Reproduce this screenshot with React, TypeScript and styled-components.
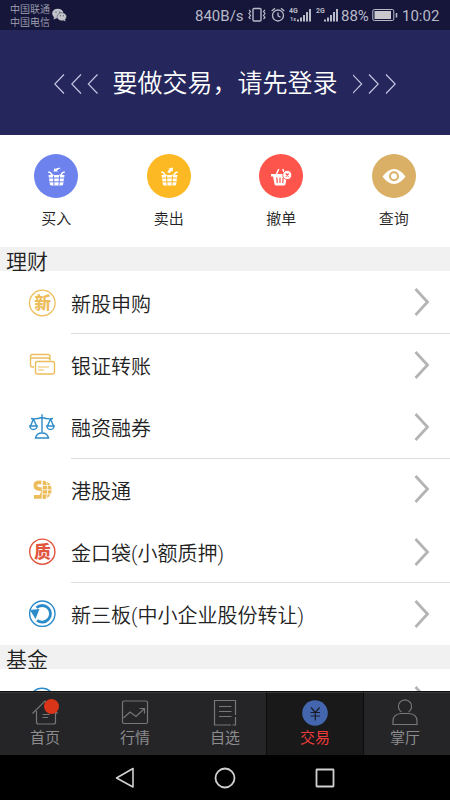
import React from 'react';
import styled, { createGlobalStyle } from 'styled-components';

const GlobalStyle = createGlobalStyle`
  * {
    box-sizing: border-box;
  }

  body {
    margin: 0;
    background: #fff;
    font-family: Roboto, 'Noto Sans CJK SC', sans-serif;
  }
`;

const Screen = styled.div`
  display: flex;
  flex-direction: column;
  width: 450px;
  height: 800px;
  overflow: hidden;
  background: #fff;
`;

const StatusBar = styled.header`
  display: flex;
  align-items: center;
  flex: 0 0 30px;
  padding: 0 10px;
  background: #15163a;
  color: #b9bac8;
  font-size: 15px;
  line-height: 28px;
`;

const Carriers = styled.div`
  width: 40px;
  padding-top: 1px;
  color: #a3a4b4;
  font-size: 10px;
  font-weight: 350;
  line-height: 13px;
  white-space: nowrap;
`;

const StatusIcon = styled.svg<{ $left?: number }>`
  flex: none;
  margin-left: ${(p) => p.$left || 0}px;
`;

const StatusText = styled.span<{ $left: number; $width: number }>`
  flex: none;
  width: ${(p) => p.$width}px;
  margin-left: ${(p) => p.$left}px;
  padding-top: 1px;
  white-space: nowrap;
`;

const Banner = styled.div`
  display: flex;
  align-items: center;
  justify-content: center;
  gap: 15px;
  flex: 0 0 105px;
  padding-top: 2px;
  background: #24265c;
  color: #fff;
  font-size: 25px;
  font-weight: 350;
  line-height: 36px;
`;

const BannerText = styled.span`
  width: 225px;
  padding-top: 1px;
  white-space: nowrap;
`;

const QuickActions = styled.div`
  display: flex;
  flex: 0 0 112px;
  padding-top: 19px;
`;

const QuickAction = styled.div`
  display: flex;
  flex: 1;
  flex-direction: column;
  align-items: center;
  color: #222;
  font-size: 15px;
  font-weight: 350;
  line-height: 22px;
`;

const QuickCircle = styled.div<{ $color: string }>`
  width: 44px;
  height: 44px;
  margin-bottom: 10px;
  border-radius: 50%;
  background: ${(p) => p.$color};
`;

const SectionTitle = styled.h2`
  flex: none;
  height: 24px;
  margin: 0;
  padding: 3px 0 0 6px;
  background: #f1f1f1;
  color: #222;
  font-size: 21px;
  font-weight: 350;
  line-height: 24px;
`;

const List = styled.div<{ $height: number }>`
  flex: none;
  height: ${(p) => p.$height}px;
  padding-top: 0.7px;
  overflow: hidden;
`;

const Row = styled.div`
  display: flex;
  align-items: stretch;
  height: 62.3px;
  padding-left: 27px;
`;

const RowIcon = styled.svg`
  flex: none;
  align-self: center;
  margin-right: 14px;
`;

const RowBody = styled.div<{ $divider?: boolean }>`
  display: flex;
  flex: 1;
  align-items: center;
  justify-content: space-between;
  padding: 0 20px 0 0;
  border-bottom: 1px solid ${(p) => (p.$divider ? '#dcdcdc' : 'transparent')};
  color: #222;
  font-size: 20px;
  font-weight: 350;
  white-space: nowrap;
`;

const RowLabel = styled.span`
  padding-top: 2px;
`;

const TabBar = styled.nav`
  display: flex;
  flex: 0 0 64px;
  border-top: 1px solid #0c0c0d;
  background: #252528;
`;

const Tab = styled.div<{ $active?: boolean }>`
  position: relative;
  display: flex;
  flex-direction: column;
  align-items: center;
  flex: 0 0 ${(p) => (p.$active ? 98 : 90)}px;
  margin: 0 ${(p) => (p.$active ? -4 : 0)}px;
  padding-top: 6px;
  border-top: 1px solid #38383b;
  border-left: ${(p) => (p.$active ? '1px solid #0b0b0b' : 'none')};
  border-right: ${(p) => (p.$active ? '1px solid #0b0b0b' : 'none')};
  background: ${(p) => (p.$active ? '#191919' : 'transparent')};
  z-index: ${(p) => (p.$active ? 1 : 0)};
  color: ${(p) => (p.$active ? '#ee3b3b' : '#8c8c8e')};
  font-size: 15px;
  line-height: 20px;
`;

const TabIcon = styled.svg`
  flex: none;
  margin-bottom: 1px;
`;

const Badge = styled.span`
  position: absolute;
  top: 6px;
  left: 44px;
  width: 15px;
  height: 15px;
  border-radius: 50%;
  background: #db3519;
`;

const SystemNav = styled.footer`
  display: flex;
  align-items: center;
  justify-content: center;
  gap: 76px;
  flex: 0 0 45px;
  background: #000;
`;

const Arrows: React.FC<{ flip?: boolean }> = ({ flip }) => (
  <svg width="44" height="22" viewBox="0 0 44 22" fill="none" stroke="#c9cae6" strokeWidth="1.1">
    <g transform={flip ? 'translate(43 0) scale(-1 1)' : undefined}>
      <path d="M10 1.500 0.800 11l9.200 9.500M27 1.500 17.800 11l9.200 9.500M43.500 1.500 34.300 11l9.200 9.500" />
    </g>
  </svg>
);

const Chevron = () => (
  <svg width="16" height="30" viewBox="0 0 16 30" fill="none" stroke="#b4b4b4" strokeWidth="2.800">
    <path d="M1.500 2 13.500 15 1.500 28" />
  </svg>
);

const Signal: React.FC<{ label: string; sub?: string }> = ({ label, sub }) => (
  <StatusIcon $left={4} width="23" height="18" viewBox="0 0 23 18" fill="#b9bac8">
    <text x="0" y="7" fontSize="7" fontWeight="700">{label}</text>
    {sub && <text x="1" y="15" fontSize="5.500" fontWeight="700">{sub}</text>}
    <path d="M8 13.500h2v2H8zM11 11.500h2v4h-2zM14 9h2v6.500h-2zM17 6h2v9.500h-2zM20 3h2v12.500h-2z" />
  </StatusIcon>
);

const Basket: React.FC<{ arrow: 'in' | 'out' }> = ({ arrow }) => (
  <svg width="44" height="44" viewBox="0 0 44 44" fill="#fff">
    <path d="M14.500 21h16l-1.400 9.300q-.2 1.200-1.400 1.200H17.300q-1.200 0-1.400-1.200z" />
    <path
      d="M14.200 18.300q2.300-.6 3 1.500t2.800 1.400M30.800 18.300q-2.300-.6-3 1.500t-2.800 1.400"
      fill="none"
      stroke="#fff"
      strokeWidth="1.500"
    />
    {arrow === 'in' ? (
      <path d="M19.500 17.500l1-3.500 1 .9q2.500-1.500 5.500-1-3 1-4.200 2.500l1.200 1.200z" />
    ) : (
      <path d="M20.500 18.500q-.3-2 2-3l-1-1 4.500-1-.3 4.200-1-.8q-1.500.6-1.500 2z" />
    )}
    <path
      d="M15 24h15M15.500 27.800h14M19.500 21.500l.5 10M25.500 21.500l-.5 10"
      fill="none"
      stroke={arrow === 'in' ? '#6d82ed' : '#fdb924'}
      strokeWidth="1"
    />
  </svg>
);

const CancelBasket = () => (
  <svg width="44" height="44" viewBox="0 0 44 44" fill="none" stroke="#fff">
    <path d="M17.500 20l2.300-5M26 20l-2.300-5" strokeWidth="1.500" />
    <path d="M12 20h17v2.500h-1.200L26.500 30q-.2 1.500-1.700 1.500h-7.600q-1.500 0-1.700-1.500l-1.500-7.500h-2z" fill="#fff" stroke="none" />
    <path d="M17.800 23.500l.5 5.500M21 23.500V29M24.200 23.500l-.5 5.500" stroke="#fd554b" strokeWidth="1.200" />
    <circle cx="28.200" cy="21" r="4.500" fill="#fff" stroke="#fd554b" strokeWidth=".8" />
    <path d="M26.700 19.500l3 3M29.700 19.500l-3 3" stroke="#fd554b" strokeWidth="1.300" />
  </svg>
);

const Eye = () => (
  <svg width="44" height="44" viewBox="0 0 44 44">
    <path d="M10.500 22.500Q16 15 22 15t11.500 7.500Q28 30 22 30t-11.500-7.500z" fill="#fff" />
    <circle cx="22" cy="22.300" r="4" fill="#fff" stroke="#dab066" strokeWidth="2" />
  </svg>
);

const quickActions = [
  { label: '买入', color: '#6d82ed', icon: <Basket arrow="in" /> },
  { label: '卖出', color: '#fdb924', icon: <Basket arrow="out" /> },
  { label: '撤单', color: '#fd554b', icon: <CancelBasket /> },
  { label: '查询', color: '#dab066', icon: <Eye /> },
];

const GOLD = '#edbd5c';
const BLUE = '#2c8bc9';
const RED = '#e2543c';

const services = [
  {
    label: '新股申购',
    icon: (
      <>
        <circle cx="15.300" cy="15" r="12.800" stroke={GOLD} strokeWidth="1.300" />
        <text x="15.800" y="21" fontSize="16.500" fontWeight="900" textAnchor="middle" fill={GOLD}>新</text>
      </>
    ),
  },
  {
    label: '银证转账',
    icon: (
      <g stroke={GOLD} strokeWidth="1.400">
        <path d="M7 17H5.500q-2 0-2-2V6.500q0-2 2-2h15.500q2 0 2 2v4M3.500 8H23" />
        <rect x="8.500" y="11.500" width="19" height="12.500" rx="2" />
        <path d="M11 17h11M11 20h6" strokeWidth="1.200" />
      </g>
    ),
  },
  {
    label: '融资融券',
    icon: (
      <g stroke={BLUE} strokeWidth="1.400">
        <path d="M15 2.300v18M4 6.500Q9 7.500 15 5.500q6 2 11 1M6.500 7 3.500 14M6.500 7l3 7M23.500 7l-3 7M23.500 7l3 7" />
        <path d="M2.800 14h7.400q-.5 3.500-3.700 3.500T2.800 14zM19.800 14h7.400q-.5 3.500-3.700 3.500T19.800 14zM8.500 26q1-5 6.500-5t6.500 5z" />
      </g>
    ),
  },
  {
    label: '港股通',
    icon: (
      <>
        <path d="M15.500 5.500a9.300 9.300 0 0 1 0 18.600z" fill={GOLD} />
        <path d="M14.500 7.600Q8.300 6.600 8.300 10.300t5 3.900.5 7.700H7" stroke={GOLD} strokeWidth="3.800" />
        <path d="M15.200 4.500v20M19 5.500q3.500 9.500 0 18.500M15 10.500h11M15 14.800h11M15 19h11" stroke="#fff" strokeWidth=".8" />
      </>
    ),
  },
  {
    label: '金口袋(小额质押)',
    icon: (
      <>
        <circle cx="15.300" cy="14.700" r="12.600" stroke={RED} strokeWidth="1.400" />
        <text x="15.500" y="20.700" fontSize="16.500" fontWeight="900" textAnchor="middle" fill={RED}>质</text>
      </>
    ),
  },
  {
    label: '新三板(中小企业股份转让)',
    icon: (
      <>
        <circle cx="15.300" cy="14.700" r="12.700" stroke={BLUE} strokeWidth="1.400" />
        <path d="M9.500 8.700a8.300 8.300 0 1 1 .5 12.600" stroke={BLUE} strokeWidth="2.800" />
        <path d="M3 11l9.500-1-4 10z" fill={BLUE} />
      </>
    ),
  },
];

const tabs = [
  {
    label: '首页',
    badge: true,
    icon: <path d="M1.500 14.500 14 2l12.500 12.500M5.500 12v11q0 2 2 2h15q2 0 2-2V12M11.500 15.500h7M11.500 18.500h5.500" />,
  },
  {
    label: '行情',
    icon: (
      <>
        <rect x="1.500" y="2" width="25" height="22.500" rx="1.500" />
        <path d="M2.500 19l6.500-6 6 4.500 8.500-8M18.500 9.500h5v5" />
      </>
    ),
  },
  {
    label: '自选',
    icon: <path d="M24.500 16V1.500h-21V26H20M24.500 18v8h-3M8 7.500h12.500M8 12.500h12.500M8 17.500h12.500" />,
  },
  {
    label: '交易',
    active: true,
    icon: (
      <>
        <circle cx="14" cy="14" r="12.800" fill="#4466ae" stroke="none" />
        <path d="M10 8.500l4.300 5 4.300-5M9.500 13.500h9.500M9.500 17h9.500M14.300 13.500V21.500" stroke="#191d29" />
      </>
    ),
  },
  {
    label: '掌厅',
    icon: (
      <>
        <path d="M10.500 13A6.600 6.600 0 1 1 17.500 13" />
        <path d="M2 25.500v-3.500q0-7 8.500-7.500h7q8.500.5 8.500 7.500v3.500z" />
      </>
    ),
  },
];

const App: React.FC = () => {
  return (
    <Screen lang="zh-CN">
      <GlobalStyle />

      <StatusBar>
        <Carriers>
          <div>中国联通</div>
          <div>中国电信</div>
        </Carriers>
        <StatusIcon $left={2} width="15" height="14" viewBox="0 0 15 14" fill="#c3c3cb">
          <ellipse cx="5.800" cy="5.500" rx="5.600" ry="4.800" />
          <path d="M2 9l-.5 2.500L5 10z" />
          <ellipse cx="9.800" cy="8.700" rx="4.700" ry="4" stroke="#15163a" strokeWidth=".4" />
          <path d="M11 12l2.500 1.500L13 11z" />
          <g fill="#15163a">
            <circle cx="4" cy="4" r=".6" />
            <circle cx="7.700" cy="4" r=".6" />
            <circle cx="8.300" cy="7.700" r=".5" />
            <circle cx="11.300" cy="7.700" r=".5" />
          </g>
        </StatusIcon>
        <StatusText $left={128} $width={49}>840B/s</StatusText>
        <StatusIcon $left={4} width="18" height="16" viewBox="0 0 18 16" fill="none" stroke="#b9bac8" strokeWidth="1.400">
          <rect x="5" y="1.500" width="8" height="12.500" rx="1" />
          <path d="M1 3l1.500 1.500L1 6.500l1.500 2L1 10.500 2.500 12M17 3l-1.500 1.500 1.500 2-1.500 2 1.500 2L15.500 12" strokeWidth="1.200" />
        </StatusIcon>
        <StatusIcon $left={5} width="14" height="16" viewBox="0 0 14 16" fill="none" stroke="#b9bac8" strokeWidth="1.300">
          <circle cx="7" cy="8.500" r="5.500" />
          <path d="M7 5.500v3.300l2.500 1.500M.7 4 4 1.200M10 1.200 13.300 4" />
        </StatusIcon>
        <Signal label="4G" sub="1x" />
        <Signal label="2G" />
        <StatusText $left={2} $width={29}>88%</StatusText>
        <StatusIcon $left={2} width="26" height="14" viewBox="0 0 26 14" fill="none" stroke="#b9bac8">
          <rect x=".8" y="1.500" width="21" height="11" rx="1.500" />
          <path d="M24.500 5v4.500" strokeWidth="1.600" />
          <rect x="2.500" y="3" width="16.500" height="8" fill="#c8c8cc" stroke="none" />
        </StatusIcon>
        <StatusText $left={4} $width={39}>10:02</StatusText>
      </StatusBar>

      <Banner>
        <Arrows />
        <BannerText>要做交易，请先登录</BannerText>
        <Arrows flip />
      </Banner>

      <QuickActions>
        {quickActions.map((action) => (
          <QuickAction key={action.label}>
            <QuickCircle $color={action.color}>{action.icon}</QuickCircle>
            {action.label}
          </QuickAction>
        ))}
      </QuickActions>

      <SectionTitle>理财</SectionTitle>
      <List $height={374}>
        {services.map((item, index) => (
          <Row key={item.label}>
            <RowIcon width="30" height="30" viewBox="0 0 30 30" fill="none">{item.icon}</RowIcon>
            <RowBody $divider={index % 2 === 0}>
              <RowLabel>{item.label}</RowLabel>
              <Chevron />
            </RowBody>
          </Row>
        ))}
      </List>

      <SectionTitle>基金</SectionTitle>
      <List $height={22}>
        <Row>
          <RowIcon width="30" height="30" viewBox="0 0 30 30" fill="none">
            <circle cx="15" cy="15" r="12.700" stroke={BLUE} strokeWidth="1.400" />
          </RowIcon>
          <RowBody>
            <span />
            <Chevron />
          </RowBody>
        </Row>
      </List>

      <TabBar>
        {tabs.map((tab) => (
          <Tab key={tab.label} $active={tab.active}>
            <TabIcon width="28" height="28" viewBox="0 0 28 28" fill="none" stroke="#77777a" strokeWidth="1.200">
              {tab.icon}
            </TabIcon>
            {tab.label}
            {tab.badge && <Badge />}
          </Tab>
        ))}
      </TabBar>

      <SystemNav>
        <svg width="24" height="24" viewBox="0 0 24 24" fill="none" stroke="#d0d0d0" strokeWidth="1.600" strokeLinejoin="round">
          <path d="M20 2.500v18.500L3.500 12z" />
        </svg>
        <svg width="24" height="24" viewBox="0 0 24 24" fill="none" stroke="#d0d0d0" strokeWidth="1.800">
          <circle cx="12" cy="12" r="9.500" />
        </svg>
        <svg width="24" height="24" viewBox="0 0 24 24" fill="none" stroke="#d0d0d0" strokeWidth="1.800">
          <rect x="3.500" y="3.500" width="17" height="17" rx=".5" />
        </svg>
      </SystemNav>
    </Screen>
  );
};

export default App;
